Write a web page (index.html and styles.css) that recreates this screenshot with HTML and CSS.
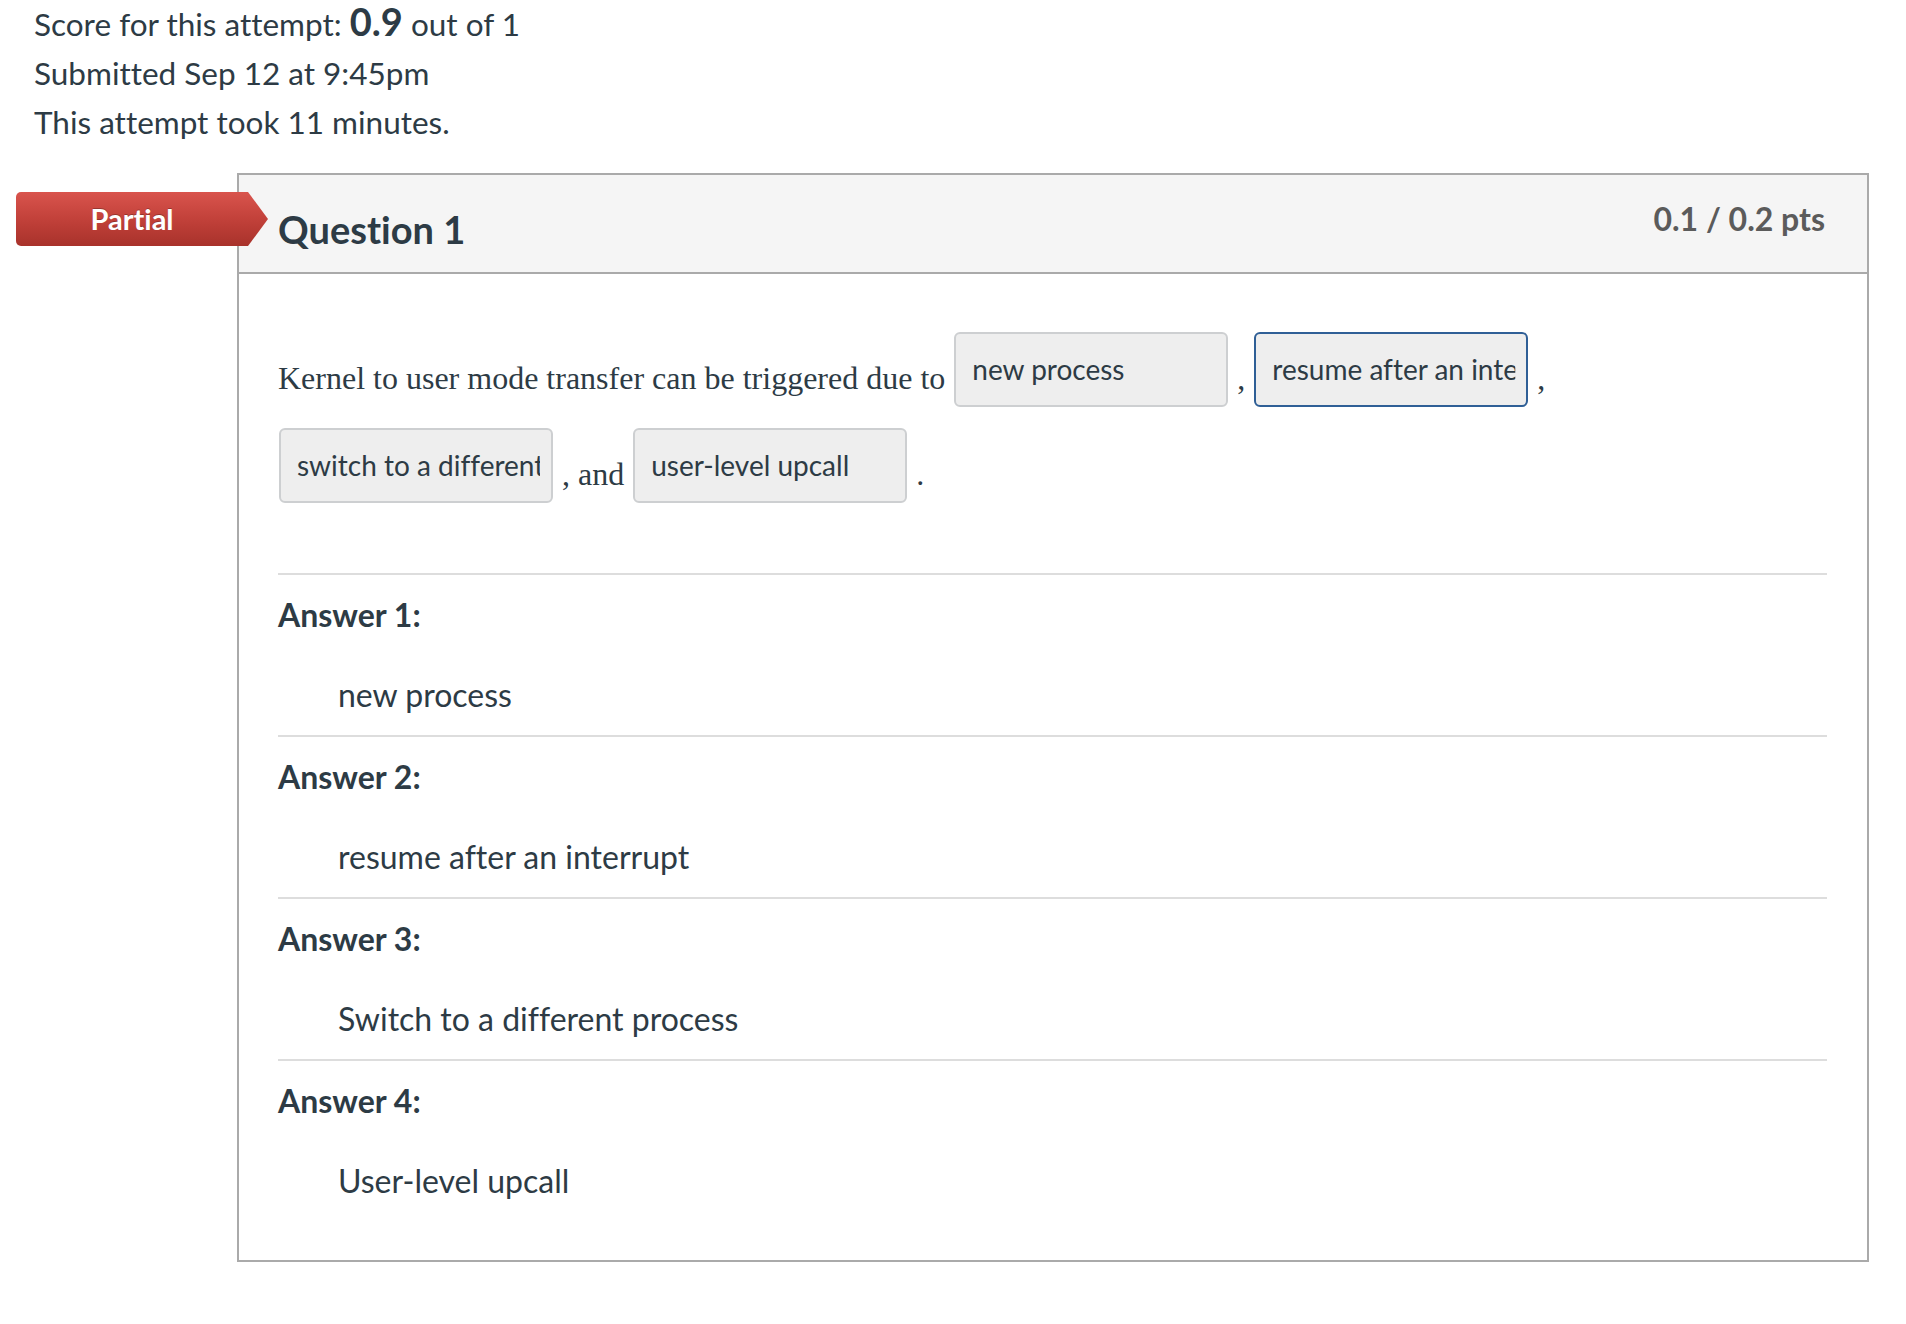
FILE: index.html
```
<!DOCTYPE html>
<html lang="en">
<head>
<meta charset="utf-8">
<title>Quiz result</title>
<link rel="stylesheet" href="styles.css">
</head>
<body>
<div class="summary">
  <div class="summary-line">Score for this attempt: <span class="score">0.9</span> out of 1</div>
  <div class="summary-line">Submitted Sep 12 at 9:45pm</div>
  <div class="summary-line">This attempt took 11 minutes.</div>
</div>

<div class="question-wrap">
  <div class="badge">Partial</div>
  <div class="question">
    <div class="q-header">
      <h2 class="q-title">Question 1</h2>
      <span class="q-points">0.1 / 0.2 pts</span>
    </div>
    <div class="q-body">
      <p class="q-text">Kernel to user mode transfer can be triggered due to <span class="blank"><span class="blank-text">new process</span></span> , <span class="blank blank-active"><span class="blank-text">resume after an interrupt</span></span> , <span class="blank"><span class="blank-text">switch to a different process</span></span> , and <span class="blank"><span class="blank-text">user-level upcall</span></span> .</p>
      <div class="answers">
        <div class="answer">
          <div class="answer-label">Answer 1:</div>
          <div class="answer-value">new process</div>
        </div>
        <div class="answer">
          <div class="answer-label">Answer 2:</div>
          <div class="answer-value">resume after an interrupt</div>
        </div>
        <div class="answer">
          <div class="answer-label">Answer 3:</div>
          <div class="answer-value">Switch to a different process</div>
        </div>
        <div class="answer">
          <div class="answer-label">Answer 4:</div>
          <div class="answer-value">User-level upcall</div>
        </div>
      </div>
    </div>
  </div>
</div>
</body>
</html>
```

FILE: styles.css
```
html, body {
  margin: 0;
  padding: 0;
  background: #ffffff;
}

body {
  font-family: Lato, "Open Sans", "Liberation Sans", sans-serif;
  color: #2d3b45;
  font-variant-ligatures: no-common-ligatures;
}

.summary {
  padding: 0 0 0 34px;
  font-size: 31.5px;
  line-height: 49px;
}

.score {
  font-weight: bold;
  font-size: 38px;
  line-height: 1;
}

.question-wrap {
  position: relative;
  margin-top: 26px;
  padding-left: 237px;
}

.badge {
  position: absolute;
  left: 16px;
  top: 19px;
  width: 252px;
  height: 54px;
  box-sizing: border-box;
  padding-right: 20px;
  border-radius: 5px 0 0 5px;
  background: linear-gradient(to bottom, #d9544d 0%, #c2413a 50%, #a8322b 100%);
  clip-path: polygon(0 0, calc(100% - 20px) 0, 100% 50%, calc(100% - 20px) 100%, 0 100%);
  color: #ffffff;
  font-size: 29px;
  font-weight: bold;
  line-height: 54px;
  text-align: center;
  text-shadow: 0 -1px 0 rgba(0, 0, 0, 0.25);
  z-index: 2;
}

.question {
  width: 1632px;
  box-sizing: border-box;
  border: 2px solid #aaaaaa;
}

.q-header {
  display: flex;
  justify-content: space-between;
  align-items: flex-start;
  height: 97px;
  padding: 0 42px 0 39px;
  background: #f5f5f5;
  border-bottom: 2px solid #aaaaaa;
}

.q-title {
  margin: 30px 0 0 0;
  font-size: 38px;
  line-height: 48px;
  font-weight: bold;
  color: #2d3b45;
}

.q-points {
  margin-top: 20px;
  font-size: 32px;
  line-height: 48px;
  font-weight: bold;
  color: #5b5b5b;
}

.q-body {
  padding: 0 40px 39px 39px;
}

.q-text {
  margin: 56px 0 0 0;
  font-family: "Liberation Serif", "Times New Roman", serif;
  font-size: 32px;
  line-height: 96px;
  color: #2d3b45;
}

.blank {
  display: inline-block;
  width: 274px;
  height: 75px;
  box-sizing: border-box;
  margin: 0 1px;
  padding: 0 11px 0 16px;
  border: 2px solid #cdcfd1;
  border-radius: 6px;
  background: #eeeeee;
  vertical-align: 9px;
  font-family: Lato, "Open Sans", "Liberation Sans", sans-serif;
  font-size: 28px;
  line-height: 71px;
  color: #2d3b45;
}

.blank-active {
  border-color: #2f5f96;
}

.blank-text {
  display: block;
  white-space: nowrap;
  clip-path: inset(0);
}

.answers {
  margin-top: 51px;
}

.answer {
  border-top: 2px solid #dddddd;
  padding: 16px 0;
}

.answer-label {
  font-size: 32px;
  line-height: 48px;
  font-weight: bold;
}

.answer-value {
  margin-top: 32px;
  padding-left: 60px;
  font-size: 32px;
  line-height: 48px;
}
```
